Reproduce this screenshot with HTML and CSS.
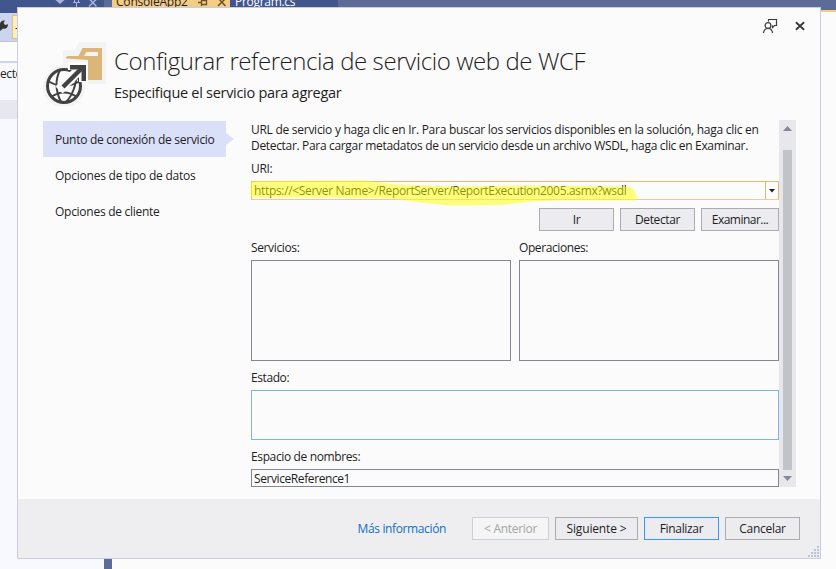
FILE: index.html
```
<!DOCTYPE html>
<html lang="es">
<head>
<meta charset="utf-8">
<title>Configurar referencia de servicio web de WCF</title>
<link rel="stylesheet" href="styles.css">
</head>
<body>
<div class="ide">
  <div class="side">
    <div class="side-title">
      <svg width="104" height="7" viewBox="0 0 104 7"><path d="M55.500 0h9l-4.500 4z" fill="#a9b4d4"/><path d="M73 2.500h7M76.500 2v5M74.500 0v2.500M78.500 0v2.500" stroke="#a9b4d4" fill="none"/><path d="M88.500-2l8 8.500M97.500-2l-8.500 8.500" stroke="#a9b4d4" stroke-width="1.500"/></svg>
    </div>
    <div class="side-tools">
      <svg width="8" height="14" viewBox="0 0 8 14"><path d="M0 4.500C1 2 3 1 5 1.800L3.500 4l1.500 2 3-.8C8 9 5 10.500 3 9.500L0 12z" fill="#333"/></svg>
      <span class="tool-on">-</span>
    </div>
    <div class="side-search"></div>
    <div class="side-tree">ecto</div>
    <div class="side-row"></div>
  </div>
  <div class="splitter"></div>
  <div class="editor">
    <div class="tabs">
      <div class="tab tab-on"><span class="t-tab1">ConsoleApp2</span>
        <svg width="32" height="8" viewBox="0 0 32 8"><path d="M1 2.500h3.500M4.500-1v7M4.500.5h5v4h-5" stroke="#6b5325" fill="none" stroke-width="1.300"/><path d="M21-2l7.500 8M29-2l-8 8" stroke="#6b5325" stroke-width="1.500"/></svg>
      </div>
      <div class="tab tab-off"><span class="t-tab2">Program.cs</span></div>
    </div>
  </div>
</div>

<div class="dialog">
  <div class="winbtns">
    <svg width="16" height="16" viewBox="0 0 16 16" fill="none" stroke="#3b3b3b" stroke-width="1.200"><path d="M6.500 3.500V1.500h8v6h-2l-2 2v-2"/><circle cx="6" cy="7.500" r="2.900"/><path d="M1.500 15c.3-3 2-4.500 4.500-4.500s4.200 1.500 4.500 4.500"/></svg>
    <svg width="10" height="10" viewBox="0 0 10 10" fill="none" stroke="#3b3b3b" stroke-width="1.900"><path d="M.9 1.200l8.200 7.600M9.100 1.200L.9 8.800"/></svg>
  </div>
  <div class="head">
    <svg width="64" height="66" viewBox="0 0 64 66">
      <g fill="#f3f3f4"><path d="M20 10h12l4-8h27v42H44v-6H20z"/><circle cx="21" cy="46.500" r="21"/></g>
      <path fill="#dcb679" d="M23 18.500V17l2-1h10.500L39.500 8H59v32H45V20zM43.500 12l-2.500 4h14v-4z"/>
      <circle cx="21" cy="46" r="16.500" fill="#fbfbfb" stroke="#424242" stroke-width="3"/>
      <path d="M5 41q16 10 32 0M8 57q13-9 26 0M17 30c-5 10-4 22 1 32M33 34c1 10-4 22-10 28" fill="none" stroke="#424242" stroke-width="2"/>
      <path d="M16 50 37 29" stroke="#fbfbfb" stroke-width="10"/><path d="M25 22h20v20h-9V30H25z" fill="#fbfbfb"/>
      <path d="M20 47 39 28" stroke="#424242" stroke-width="4.500"/><path d="M27 25h16v16h-4.500V29.500H27z" fill="#424242"/>
    </svg>
    <div class="titles">
      <h1><span class="t-title">Configurar referencia de servicio web de WCF</span></h1>
      <p><span class="t-sub">Especifique el servicio para agregar</span></p>
    </div>
  </div>
  <div class="main">
    <div class="nav">
      <div class="nav-item nav-on"><span class="t-n1">Punto de conexión de servicio</span></div>
      <div class="nav-item"><span class="t-n2">Opciones de tipo de datos</span></div>
      <div class="nav-item"><span class="t-n3">Opciones de cliente</span></div>
    </div>
    <div class="pane">
      <div class="intro"><div><span class="t-i1">URL de servicio y haga clic en Ir. Para buscar los servicios disponibles en la solución, haga clic en</span></div><div><span class="t-i2">Detectar. Para cargar metadatos de un servicio desde un archivo WSDL, haga clic en Examinar.</span></div></div>
      <div class="label l-uri"><span class="t-uri">URI:</span></div>
      <div class="combo">
        <span class="combo-text"><span class="t-url">https://&lt;Server Name&gt;/ReportServer/ReportExecution2005.asmx?wsdl</span></span>
        <span class="combo-btn"><svg width="6" height="4" viewBox="0 0 6 4"><path d="M0 0h6L3 3.500z" fill="#1e1e1e"/></svg></span>
        <svg class="marker" width="392" height="30" viewBox="249 178 392 30"><path d="M250.500 182 258 181l107-.5 30 4 60 2 75-1 100 1 3 2 4.500 9-2 3H560l-28 1-30 3.500-54 .5-27-3-31-4-60-1H258l-7.500-1z" fill="#ff0" fill-opacity=".5"/></svg>
      </div>
      <div class="row-btns">
        <div class="btn w75"><span class="t-ir">Ir</span></div><div class="btn w75"><span class="t-det">Detectar</span></div><div class="btn w78"><span class="t-exa">Examinar...</span></div>
      </div>
      <div class="lists">
        <div class="col"><div class="label"><span class="t-ser">Servicios:</span></div><div class="list"></div></div>
        <div class="col"><div class="label"><span class="t-ope">Operaciones:</span></div><div class="list"></div></div>
      </div>
      <div class="label l-est"><span class="t-est">Estado:</span></div>
      <div class="status"></div>
      <div class="label l-ns"><span class="t-esp">Espacio de nombres:</span></div>
      <div class="input"><span class="t-sr">ServiceReference1</span></div>
    </div>
    <div class="scroll">
      <svg width="9" height="5" viewBox="0 0 9 5"><path d="M0 5h9L4.500 0z" fill="#868999"/></svg>
      <div class="thumb"></div>
      <svg width="9" height="5" viewBox="0 0 9 5"><path d="M0 0h9L4.500 5z" fill="#868999"/></svg>
    </div>
  </div>
  <div class="foot">
    <a class="link"><span class="t-mas">Más información</span></a>
    <div class="btn w77 off"><span class="t-ant">&lt; Anterior</span></div>
    <div class="btn w83"><span class="t-sig">Siguiente &gt;</span></div>
    <div class="btn w75 primary"><span class="t-fin">Finalizar</span></div>
    <div class="btn w75"><span class="t-can">Cancelar</span></div>
    <svg class="grip" width="12" height="12" viewBox="0 0 12 12" fill="#bcc3d6"><path d="M9 0h2v2H9zM9 3h2v2H9zM9 6h2v2H9zM9 9h2v2H9zM6 3h2v2H6zM6 6h2v2H6zM6 9h2v2H6zM3 6h2v2H3zM3 9h2v2H3zM0 9h2v2H0z"/></svg>
  </div>
</div>
</body>
</html>
```
FILE: styles.css
```
* { box-sizing: border-box; }
body { margin: 0; width: 836px; height: 569px; overflow: hidden; position: relative; background: #fbfbfb; color: #1e1e1e; font: 12px/16px "Open Sans", "Noto Sans", sans-serif; }
svg { display: block; flex: none; }
span[class^="t-"] { white-space: nowrap; letter-spacing: -0.3px; }
span.t-title { letter-spacing: -0.42px; }
span.t-sub { letter-spacing: -0.29px; }
span.t-n1, span.t-n3, span.t-i1 { letter-spacing: -0.27px; }
span.t-n2 { letter-spacing: -0.23px; }
span.t-i2, span.t-url, span.t-fin { letter-spacing: -0.325px; }
span.t-det, span.t-ser, span.t-esp, span.t-mas { letter-spacing: -0.37px; }
span.t-ope, span.t-est, span.t-sr { letter-spacing: -0.41px; }
span.t-exa { letter-spacing: -0.52px; }
span.t-sig { letter-spacing: -0.15px; }
span.t-tab1 { letter-spacing: -0.2px; }

.ide { display: flex; height: 569px; }
.side { width: 104px; background: #f7f9fe; }
.side-title { height: 13px; background: #40568d; }
.side-tools { height: 28px; background: #ccd5f0; display: flex; gap: 4px; padding-top: 2px; }
.side-tools svg { margin-top: 4px; }
.tool-on { width: 24px; height: 24px; border: 1px solid #e5c365; background: #ffeec5; padding: 4px 0 0 2px; }
.side-search { height: 22px; background: #fcfcfc; border-top: 1px solid #b9c3dd; border-bottom: 2px solid #ccd5f0; }
.side-tree { height: 37px; padding-top: 3px; letter-spacing: -0.4px; }
.side-row { height: 19px; background: #e6e7ef; }
.splitter { width: 8px; background: #5d6b99; }
.editor { flex: 1; }
.tabs { height: 12px; background: #5d6b99; border-bottom: 2px solid #f5cc84; display: flex; }
.tab { height: 12px; line-height: 14px; display: flex; }
.tab span { margin-top: -5px; }
.tab-on { width: 118px; background: #f5cc84; padding-left: 4px; gap: 9px; }
.tab-off { width: 108px; background: #40568d; color: #fff; padding-left: 5px; }

.dialog { position: absolute; left: 17px; top: 7px; width: 804px; height: 552px; background: #fbfbfb; border: 1px solid #ccccdc; display: flex; flex-direction: column; }
.winbtns { display: flex; justify-content: flex-end; gap: 17px; padding: 10px 15px 0 0; height: 32px; }
.winbtns svg + svg { margin-top: 3px; }
.head { display: flex; padding-left: 25px; gap: 7px; height: 73px; }
.titles { padding-top: 5px; }
h1 { margin: 0; font-size: 24px; line-height: 32px; font-weight: 300; }
p { margin: 0; font-size: 14.500px; line-height: 20px; padding-top: 6px; }
.main { display: flex; height: 386px; padding: 7px 24px 12px 25px; }
.nav { width: 208px; padding-top: 1px; }
.nav-item { width: 183px; height: 36px; line-height: 38px; padding-left: 12px; position: relative; }
.nav-on { background: #dae0f8; }
.nav-on::after { content: ""; position: absolute; left: 183px; top: 12px; border: 6px solid transparent; border-left: 8px solid #dae0f8; border-right: 0; }
.pane { width: 528px; }
.intro { padding-top: 2px; }
.intro div { height: 16px; }
.label { height: 16px; }
.l-uri { margin-top: 7px; }
.combo { height: 19px; margin-top: 4px; border: 1px solid #e2b973; border-bottom-color: #eccb9b; background: #fcfcfc; display: flex; position: relative; line-height: 18px; }
.combo-text { flex: 1; padding-left: 2px; }
.combo-btn { width: 13px; border-left: 1px solid #e2b973; display: flex; align-items: center; justify-content: center; }
.marker { position: absolute; left: -3px; top: -4px; }
.row-btns { display: flex; justify-content: flex-end; gap: 6px; margin-top: 8px; }
.btn { height: 23px; line-height: 22px; border: 1px solid #acacac; background: #ececf0; text-align: center; }
.w75 { width: 75px; }
.w77 { width: 77px; }
.w78 { width: 78px; }
.w83 { width: 83px; }
.lists { display: flex; gap: 8px; margin-top: 9px; }
.col { flex: 1; }
.list { height: 101px; margin-top: 4px; border: 1px solid #828790; }
.l-est { margin-top: 9px; }
.status { height: 50px; margin-top: 4px; border: 1px solid #7eb4ea; }
.l-ns { margin-top: 9px; }
.input { height: 18px; margin-top: 4px; border: 1px solid #828790; padding-left: 2px; line-height: 18px; }
.scroll { width: 17px; background: #e8e8ec; display: flex; flex-direction: column; align-items: center; padding: 6px 0; }
.thumb { width: 9px; height: 320px; background: #c2c3c9; margin: 19px 0 6px; }
.foot { height: 59px; background: #eeeef0; display: flex; gap: 6px; padding: 18px 20px 0 0; justify-content: flex-end; position: relative; }
.link { color: #0e70c0; line-height: 24px; margin-right: 20px; }
.off { background: #f5f5f5; border-color: #ccceda; color: #a2a4a5; }
.primary { border-color: #3399ff; }
.grip { position: absolute; right: 0; bottom: 0; }
```
